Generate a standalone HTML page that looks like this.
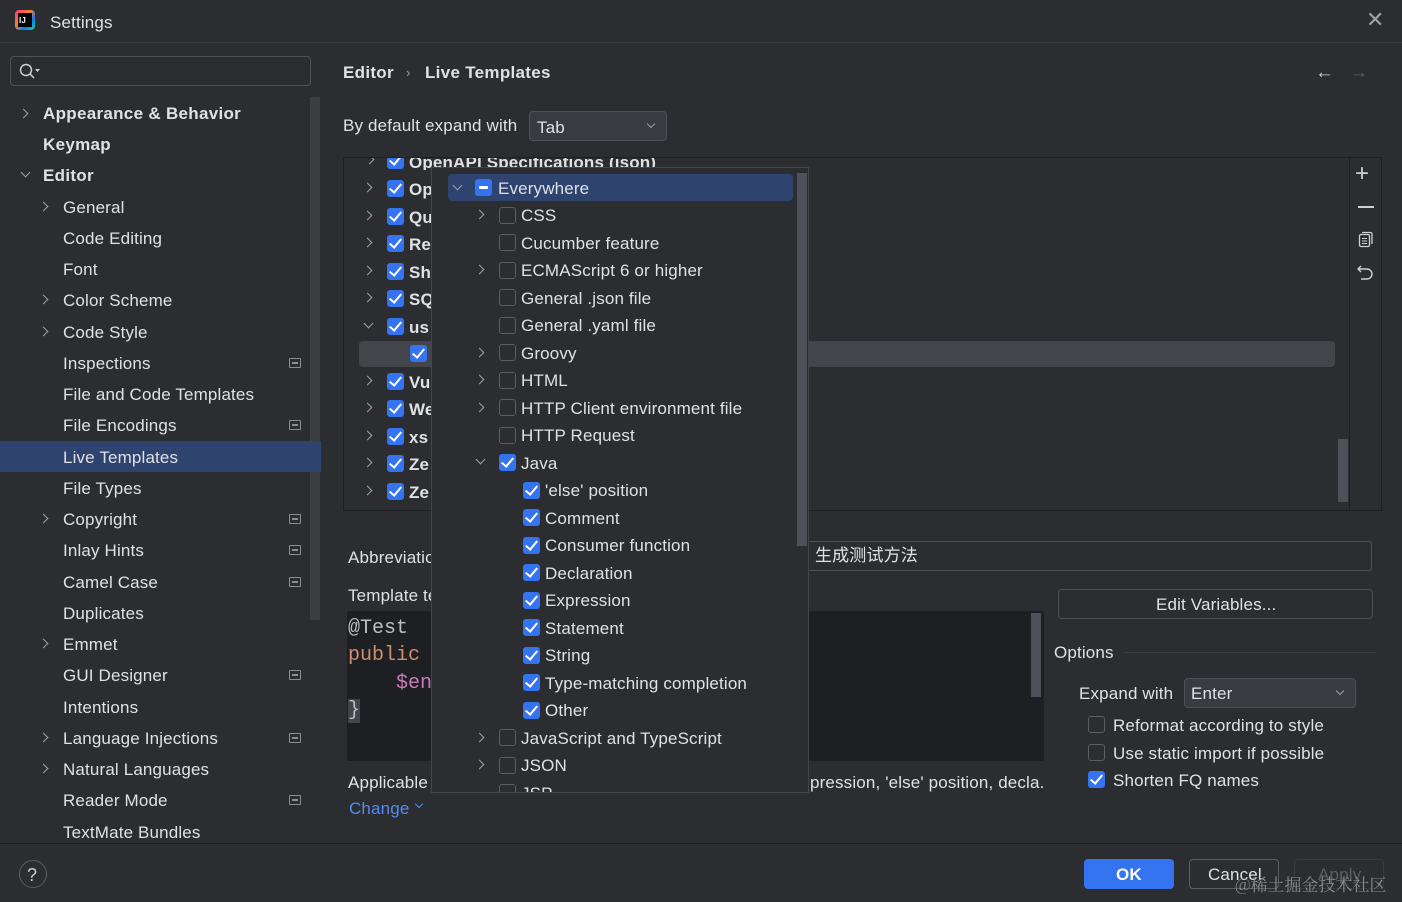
<!DOCTYPE html>
<html><head><meta charset="utf-8"><style>
*{margin:0;padding:0;box-sizing:border-box}
body{width:1402px;height:902px;background:#2b2d30;font-family:"Liberation Sans","Noto Sans CJK SC",sans-serif;color:#dfe1e5;font-size:17px;letter-spacing:.15px;position:relative;overflow:hidden}
.a{position:absolute;white-space:nowrap;line-height:20px;margin-top:1px}
.chev{position:absolute;width:7px;height:7px;border-right:1.5px solid #9da0a8;border-bottom:1.5px solid #9da0a8}
.cr{transform:rotate(-45deg)}
.cd{transform:rotate(45deg)}
.cb{position:absolute;width:17px;height:17px;border-radius:3px;background:#3574f0}
.cb::after{content:"";position:absolute;left:5px;top:1px;width:5px;height:10px;border-right:2.2px solid #fff;border-bottom:2.2px solid #fff;transform:rotate(40deg)}
.cu{position:absolute;width:17px;height:17px;border-radius:3px;border:1.3px solid #5a5d63;background:#2b2d30}
.mi{position:absolute;width:12px;height:10px;border:1.3px solid #8a8d94;border-radius:1px}
.mi::after{content:"";position:absolute;left:2px;top:3px;width:6px;height:2px;background:#8a8d94}
.m{font-family:'Liberation Mono',monospace;font-size:20px;line-height:24px;letter-spacing:0}
</style></head><body>
<!-- title -->
<div style="position:absolute;left:15px;top:10px;width:20px;height:20px;border-radius:4px;background:linear-gradient(135deg,#ff318c,#fc801d 40%,#087cfa 70%,#21d789)"></div>
<div style="position:absolute;left:18px;top:13px;width:14px;height:14px;background:#000"></div>
<div class="a" style="left:19px;top:10px;font-size:8px;color:#fff;font-weight:bold">IJ</div>
<div class="a" style="left:50px;top:12px;font-size:17px">Settings</div>
<div class="a" style="left:1366px;top:9px;font-size:22px;color:#9da0a8">✕</div>
<div style="position:absolute;left:0;top:42px;width:1402px;height:1px;background:#393b40"></div>
<!-- search -->
<div style="position:absolute;left:10px;top:56px;width:301px;height:30px;border:1px solid #4e5157;border-radius:4px;background:#2b2d30"></div>
<svg style="position:absolute;left:18px;top:62px" width="22" height="18"><circle cx="8" cy="8" r="5.5" fill="none" stroke="#ced0d6" stroke-width="1.5"/><line x1="12" y1="12" x2="16" y2="16" stroke="#ced0d6" stroke-width="1.5"/><path d="M17 7h5l-2.5 3z" fill="#ced0d6"/></svg>
<!-- sidebar scrollbar -->
<div style="position:absolute;left:310px;top:97px;width:10px;height:523px;background:#3c3e42"></div>
<div style="position:absolute;left:0;top:441px;width:321px;height:31px;background:#2e436e"></div>
<div class="chev cr" style="left:20px;top:110px"></div>
<div class="a" style="left:43px;top:103px;font-size:17px;font-weight:bold;letter-spacing:.3px">Appearance &amp; Behavior</div>
<div class="a" style="left:43px;top:134px;font-size:17px;font-weight:bold;letter-spacing:.3px">Keymap</div>
<div class="chev cd" style="left:22px;top:169px"></div>
<div class="a" style="left:43px;top:165px;font-size:17px;font-weight:bold;letter-spacing:.3px">Editor</div>
<div class="chev cr" style="left:40px;top:203px"></div><div class="a" style="left:63px;top:197px">General</div>
<div class="a" style="left:63px;top:228px">Code Editing</div>
<div class="a" style="left:63px;top:259px">Font</div>
<div class="chev cr" style="left:40px;top:296px"></div><div class="a" style="left:63px;top:290px">Color Scheme</div>
<div class="chev cr" style="left:40px;top:328px"></div><div class="a" style="left:63px;top:322px">Code Style</div>
<div class="a" style="left:63px;top:353px">Inspections</div><div class="mi" style="left:289px;top:358px"></div>
<div class="a" style="left:63px;top:384px">File and Code Templates</div>
<div class="a" style="left:63px;top:415px">File Encodings</div><div class="mi" style="left:289px;top:420px"></div>
<div class="a" style="left:63px;top:447px">Live Templates</div>
<div class="a" style="left:63px;top:478px">File Types</div>
<div class="chev cr" style="left:40px;top:515px"></div><div class="a" style="left:63px;top:509px">Copyright</div><div class="mi" style="left:289px;top:514px"></div>
<div class="a" style="left:63px;top:540px">Inlay Hints</div><div class="mi" style="left:289px;top:545px"></div>
<div class="a" style="left:63px;top:572px">Camel Case</div><div class="mi" style="left:289px;top:577px"></div>
<div class="a" style="left:63px;top:603px">Duplicates</div>
<div class="chev cr" style="left:40px;top:640px"></div><div class="a" style="left:63px;top:634px">Emmet</div>
<div class="a" style="left:63px;top:665px">GUI Designer</div><div class="mi" style="left:289px;top:670px"></div>
<div class="a" style="left:63px;top:697px">Intentions</div>
<div class="chev cr" style="left:40px;top:734px"></div><div class="a" style="left:63px;top:728px">Language Injections</div><div class="mi" style="left:289px;top:733px"></div>
<div class="chev cr" style="left:40px;top:765px"></div><div class="a" style="left:63px;top:759px">Natural Languages</div>
<div class="a" style="left:63px;top:790px">Reader Mode</div><div class="mi" style="left:289px;top:795px"></div>
<div class="a" style="left:63px;top:822px">TextMate Bundles</div>
<!-- header -->
<div class="a" style="left:343px;top:62px;font-size:17px;font-weight:bold;letter-spacing:.3px">Editor</div>
<div class="a" style="left:406px;top:62px;font-size:13px;color:#9da0a8">›</div>
<div class="a" style="left:425px;top:62px;font-size:17px;font-weight:bold;letter-spacing:.3px">Live Templates</div>
<div class="a" style="left:1315px;top:62px;font-size:19px;color:#ced0d6">←</div>
<div class="a" style="left:1349px;top:62px;font-size:19px;color:#5a5d63">→</div>
<div class="a" style="left:343px;top:115px">By default expand with</div>
<div style="position:absolute;left:529px;top:111px;width:138px;height:30px;border:1px solid #4e5157;border-radius:4px;background:#393b40"></div>
<div class="a" style="left:537px;top:117px">Tab</div>
<div class="chev cd" style="left:648px;top:121px;width:6px;height:6px"></div>
<!-- template list -->
<div style="position:absolute;left:343px;top:157px;width:1039px;height:354px;border:1px solid #1e1f22;background:#2b2d30"></div>
<div style="position:absolute;left:1349px;top:158px;width:1px;height:352px;background:#1e1f22"></div>
<div style="position:absolute;left:359px;top:341px;width:976px;height:26px;border-radius:4px;background:#43454a"></div>
<div style="position:absolute;left:1338px;top:439px;width:10px;height:63px;background:#4e5157"></div>
<div class="a" style="left:1355px;top:163px;font-size:24px;color:#ced0d6;font-weight:200">+</div>
<div style="position:absolute;left:1358px;top:206px;width:16px;height:1.5px;background:#ced0d6"></div>
<svg style="position:absolute;left:1357px;top:230px" width="18" height="18"><rect x="2.5" y="4.5" width="10" height="12" rx="1.5" fill="none" stroke="#ced0d6" stroke-width="1.3"/><path d="M5 2.5h8.5a1.5 1.5 0 0 1 1.5 1.5v10" fill="none" stroke="#ced0d6" stroke-width="1.3"/><path d="M5 8.5h5M5 11h5M5 13.5h5" stroke="#ced0d6"/></svg>
<svg style="position:absolute;left:1356px;top:263px" width="20" height="18"><path d="M5 3L2 6l3 3M2 6h9a5 5 0 0 1 0 10H5" fill="none" stroke="#ced0d6" stroke-width="1.4"/></svg>
<div style="position:absolute;left:344px;top:158px;width:1005px;height:12px;overflow:hidden">
<div class="chev cr" style="left:22px;top:-2px"></div><div class="cb" style="left:43px;top:-6px"></div><div class="a" style="left:65px;top:-6px;font-weight:bold">OpenAPI Specifications (json)</div></div>
<div class="chev cr" style="left:364px;top:184px"></div><div class="cb" style="left:387px;top:180px"></div><div class="a" style="left:409px;top:179px;font-size:17px;font-weight:bold">Op</div>
<div class="chev cr" style="left:364px;top:212px"></div><div class="cb" style="left:387px;top:208px"></div><div class="a" style="left:409px;top:207px;font-size:17px;font-weight:bold">Qu</div>
<div class="chev cr" style="left:364px;top:239px"></div><div class="cb" style="left:387px;top:235px"></div><div class="a" style="left:409px;top:234px;font-size:17px;font-weight:bold">Re</div>
<div class="chev cr" style="left:364px;top:267px"></div><div class="cb" style="left:387px;top:263px"></div><div class="a" style="left:409px;top:262px;font-size:17px;font-weight:bold">Sh</div>
<div class="chev cr" style="left:364px;top:294px"></div><div class="cb" style="left:387px;top:290px"></div><div class="a" style="left:409px;top:289px;font-size:17px;font-weight:bold">SQ</div>
<div class="chev cd" style="left:365px;top:320px"></div><div class="cb" style="left:387px;top:318px"></div><div class="a" style="left:409px;top:317px;font-size:17px;font-weight:bold">us</div>
<div class="cb" style="left:410px;top:345px"></div>
<div class="chev cr" style="left:364px;top:377px"></div><div class="cb" style="left:387px;top:373px"></div><div class="a" style="left:409px;top:372px;font-size:17px;font-weight:bold">Vu</div>
<div class="chev cr" style="left:364px;top:404px"></div><div class="cb" style="left:387px;top:400px"></div><div class="a" style="left:409px;top:399px;font-size:17px;font-weight:bold">We</div>
<div class="chev cr" style="left:364px;top:432px"></div><div class="cb" style="left:387px;top:428px"></div><div class="a" style="left:409px;top:427px;font-size:17px;font-weight:bold">xs</div>
<div class="chev cr" style="left:364px;top:459px"></div><div class="cb" style="left:387px;top:455px"></div><div class="a" style="left:409px;top:454px;font-size:17px;font-weight:bold">Ze</div>
<div class="chev cr" style="left:364px;top:487px"></div><div class="cb" style="left:387px;top:483px"></div><div class="a" style="left:409px;top:482px;font-size:17px;font-weight:bold">Ze</div>
<!-- bottom fields -->
<div class="a" style="left:348px;top:547px">Abbreviation</div>
<div style="position:absolute;left:806px;top:541px;width:566px;height:30px;border:1px solid #4e5157;border-radius:3px;background:#2b2d30"></div>
<div class="a" style="left:815px;top:545px">生成测试方法</div>
<div class="a" style="left:348px;top:585px">Template text:</div>
<div style="position:absolute;left:347px;top:611px;width:697px;height:150px;background:#1e1f22"></div>
<div style="position:absolute;left:1031px;top:613px;width:10px;height:84px;background:#4e5157"></div>
<div class="a m" style="left:348px;top:616px;color:#bcbec4">@Test</div>
<div class="a m" style="left:348px;top:643px;color:#cf8e6d">public</div>
<div class="a m" style="left:396px;top:671px;color:#c77dbb">$en</div>
<div class="a m" style="left:348px;top:698px;color:#bcbec4;background:#43454a">}</div>
<div class="a" style="left:348px;top:772px">Applicable</div>
<div class="a" style="left:810px;top:772px">pression, 'else' position, decla.</div>
<div class="a" style="left:349px;top:798px;color:#548af7">Change</div>
<div class="chev cd" style="left:416px;top:801px;width:6px;height:6px;border-color:#548af7"></div>
<div style="position:absolute;left:1058px;top:589px;width:315px;height:30px;border:1px solid #4e5157;border-radius:4px"></div>
<div class="a" style="left:1156px;top:594px">Edit Variables...</div>
<div class="a" style="left:1054px;top:642px">Options</div>
<div style="position:absolute;left:1123px;top:652px;width:253px;height:1px;background:#393b40"></div>
<div class="a" style="left:1079px;top:683px">Expand with</div>
<div style="position:absolute;left:1184px;top:678px;width:172px;height:30px;border:1px solid #4e5157;border-radius:4px;background:#393b40"></div>
<div class="a" style="left:1191px;top:683px">Enter</div>
<div class="chev cd" style="left:1337px;top:688px;width:6px;height:6px"></div>
<div class="cu" style="left:1088px;top:716px"></div><div class="a" style="left:1113px;top:715px">Reformat according to style</div>
<div class="cu" style="left:1088px;top:744px"></div><div class="a" style="left:1113px;top:743px">Use static import if possible</div>
<div class="cb" style="left:1088px;top:771px"></div><div class="a" style="left:1113px;top:770px">Shorten FQ names</div>
<!-- popup -->
<div style="position:absolute;left:431px;top:167px;width:378px;height:626px;border:1px solid #43454a;background:#2b2d30;overflow:hidden">
<div style="position:absolute;left:365px;top:5px;width:10px;height:373px;background:#4e5157"></div>
<div style="position:absolute;left:16px;top:6px;width:345px;height:27px;border-radius:4px;background:#2e436e"></div>
</div>
<div class="chev cd" style="left:454px;top:182px"></div>
<div style="position:absolute;left:475px;top:179px;width:17px;height:17px;border-radius:3px;background:#3574f0"></div>
<div style="position:absolute;left:479px;top:186px;width:9px;height:3px;background:#fff;border-radius:1px"></div>
<div class="a" style="left:498px;top:178px">Everywhere</div>
<div class="chev cr" style="left:476px;top:211px"></div><div class="cu" style="left:499px;top:207px"></div><div class="a" style="left:521px;top:205px">CSS</div>
<div class="cu" style="left:499px;top:234px"></div><div class="a" style="left:521px;top:233px">Cucumber feature</div>
<div class="chev cr" style="left:476px;top:266px"></div><div class="cu" style="left:499px;top:262px"></div><div class="a" style="left:521px;top:260px">ECMAScript 6 or higher</div>
<div class="cu" style="left:499px;top:289px"></div><div class="a" style="left:521px;top:288px">General .json file</div>
<div class="cu" style="left:499px;top:317px"></div><div class="a" style="left:521px;top:315px">General .yaml file</div>
<div class="chev cr" style="left:476px;top:349px"></div><div class="cu" style="left:499px;top:344px"></div><div class="a" style="left:521px;top:343px">Groovy</div>
<div class="chev cr" style="left:476px;top:376px"></div><div class="cu" style="left:499px;top:372px"></div><div class="a" style="left:521px;top:370px">HTML</div>
<div class="chev cr" style="left:476px;top:404px"></div><div class="cu" style="left:499px;top:399px"></div><div class="a" style="left:521px;top:398px">HTTP Client environment file</div>
<div class="cu" style="left:499px;top:427px"></div><div class="a" style="left:521px;top:425px">HTTP Request</div>
<div class="chev cd" style="left:477px;top:456px"></div><div class="cb" style="left:499px;top:454px"></div><div class="a" style="left:521px;top:453px">Java</div>
<div class="cb" style="left:523px;top:482px"></div><div class="a" style="left:545px;top:480px">'else' position</div>
<div class="cb" style="left:523px;top:509px"></div><div class="a" style="left:545px;top:508px">Comment</div>
<div class="cb" style="left:523px;top:537px"></div><div class="a" style="left:545px;top:535px">Consumer function</div>
<div class="cb" style="left:523px;top:564px"></div><div class="a" style="left:545px;top:563px">Declaration</div>
<div class="cb" style="left:523px;top:592px"></div><div class="a" style="left:545px;top:590px">Expression</div>
<div class="cb" style="left:523px;top:619px"></div><div class="a" style="left:545px;top:618px">Statement</div>
<div class="cb" style="left:523px;top:647px"></div><div class="a" style="left:545px;top:645px">String</div>
<div class="cb" style="left:523px;top:674px"></div><div class="a" style="left:545px;top:673px">Type-matching completion</div>
<div class="cb" style="left:523px;top:702px"></div><div class="a" style="left:545px;top:700px">Other</div>
<div class="chev cr" style="left:476px;top:734px"></div><div class="cu" style="left:499px;top:729px"></div><div class="a" style="left:521px;top:728px">JavaScript and TypeScript</div>
<div class="chev cr" style="left:476px;top:761px"></div><div class="cu" style="left:499px;top:757px"></div><div class="a" style="left:521px;top:755px">JSON</div>
<div style="position:absolute;left:499px;top:784px;width:300px;height:8px;overflow:hidden"><div class="cu" style="left:0;top:0"></div><div class="a" style="left:22px;top:-1px">JSP</div></div>
<!-- footer -->
<div style="position:absolute;left:0;top:843px;width:1402px;height:1px;background:#1e1f22"></div>
<div style="position:absolute;left:19px;top:860px;width:28px;height:28px;border:1px solid #5a5d63;border-radius:50%"></div>
<div class="a" style="left:27px;top:864px;font-size:18px;color:#ced0d6">?</div>
<div style="position:absolute;left:1084px;top:859px;width:90px;height:30px;border-radius:4px;background:#3574f0"></div>
<div class="a" style="left:1116px;top:864px;color:#fff;font-weight:bold">OK</div>
<div style="position:absolute;left:1189px;top:859px;width:90px;height:30px;border:1px solid #5a5d63;border-radius:4px"></div>
<div class="a" style="left:1208px;top:864px">Cancel</div>
<div style="position:absolute;left:1294px;top:859px;width:90px;height:30px;border:1px solid #393b40;border-radius:4px"></div>
<div class="a" style="left:1318px;top:864px;color:#5a5d63">Apply</div>
<div class="a" style="left:1235px;top:873px;font-size:17px;letter-spacing:0;color:#8a8c90;font-family:'Noto Serif CJK SC',serif">@稀土掘金技术社区</div>
</body></html>
